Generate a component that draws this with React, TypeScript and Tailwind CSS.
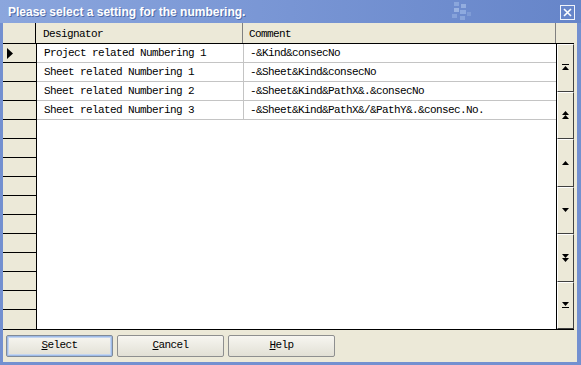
import React from "react";

const rows = [
  { designator: "Project related Numbering 1", comment: "-&Kind&consecNo" },
  { designator: "Sheet related Numbering 1", comment: "-&Sheet&Kind&consecNo" },
  { designator: "Sheet related Numbering 2", comment: "-&Sheet&Kind&PathX&.&consecNo" },
  { designator: "Sheet related Numbering 3", comment: "-&Sheet&Kind&PathX&/&PathY&.&consec.No." },
];

const mono = "font-['Liberation_Mono','DejaVu_Sans_Mono',monospace] text-[11px] tracking-[-0.6px] text-black";

function Tri({ down = false }: { down?: boolean }) {
  return down ? <polygon points="0,0 7,0 3.5,4" fill="black" /> : <polygon points="3.5,0 7,4 0,4" fill="black" />;
}

function ScrollIcon({ kind }: { kind: string }) {
  return (
    <svg width="7" height="10" viewBox="0 0 7 10">
      {kind === "first" && (
        <g>
          <rect x="0" y="1" width="7" height="1" fill="black" />
          <g transform="translate(0,3)"><Tri /></g>
        </g>
      )}
      {kind === "pageUp" && (
        <g>
          <g transform="translate(0,1)"><Tri /></g>
          <g transform="translate(0,5)"><Tri /></g>
        </g>
      )}
      {kind === "up" && <g transform="translate(0,3)"><Tri /></g>}
      {kind === "down" && <g transform="translate(0,3)"><Tri down /></g>}
      {kind === "pageDown" && (
        <g>
          <g transform="translate(0,1)"><Tri down /></g>
          <g transform="translate(0,5)"><Tri down /></g>
        </g>
      )}
      {kind === "last" && (
        <g>
          <g transform="translate(0,2)"><Tri down /></g>
          <rect x="0" y="7" width="7" height="1" fill="black" />
        </g>
      )}
    </svg>
  );
}

function DialogButton({ label, isDefault = false }: { label: string; isDefault?: boolean }) {
  return (
    <div
      className={`w-[107px] h-[22px] flex items-center justify-center border rounded-[2px] bg-gradient-to-b from-[#f7f6f1] to-[#e2e0d5] ${
        isDefault ? "border-[#7f8a99] shadow-[inset_0_0_0_1px_#9fbbe6,inset_0_0_0_2px_#c3d5f0]" : "border-[#8e8f8f]"
      }`}
    >
      <span className={mono}>
        <span className="underline">{label[0]}</span>
        {label.slice(1)}
      </span>
    </div>
  );
}

export default function App(): React.JSX.Element {
  return (
    <div className="w-[581px] h-[365px] bg-[#7390d0] flex flex-col overflow-hidden">
      {/* title bar */}
      <div className="h-[23px] flex items-center relative bg-gradient-to-r from-[#8ba6dd] via-[#7895d4] to-[#6685c9]">
        <span className="pl-[8px] text-white font-bold text-[12px] font-['Liberation_Sans',Arial,sans-serif] [text-shadow:1px_1px_0_#4f6aa8]">
          Please select a setting for the numbering.
        </span>
        <svg className="absolute left-[448px] top-[2px]" width="30" height="20" viewBox="0 0 30 20">
          <rect x="6" y="0" width="5" height="4" fill="#8aa6dc" />
          <rect x="13" y="2" width="5" height="4" fill="#93addf" />
          <rect x="6" y="6" width="5" height="4" fill="#9ab3e2" />
          <rect x="12" y="8" width="6" height="4" fill="#8eaadf" />
          <rect x="4" y="12" width="5" height="4" fill="#86a2da" />
          <rect x="12" y="14" width="5" height="4" fill="#89a5db" />
          <rect x="19" y="10" width="4" height="4" fill="#7f9cd6" />
        </svg>
        <div className="absolute left-[560px] top-[5px] w-[15px] h-[15px] border border-white/90 flex items-center justify-center">
          <svg width="9" height="9" viewBox="0 0 9 9">
            <path d="M1 1 L8 8 M8 1 L1 8" stroke="white" strokeWidth="1.6" />
          </svg>
        </div>
      </div>

      {/* body */}
      <div className="flex-1 ml-[3px] mr-[4px] mb-[3px] bg-[#ece9d8] flex flex-col">
        <div className="w-[571px] h-[307px] flex flex-col border-b border-black">
          {/* header */}
          <div className="h-[21px] shrink-0 flex border-b border-black bg-[#ece9d8]">
            <div className="w-[33px] border-r border-black" />
            <div className="w-[207px] border-r border-[#808080] flex items-center pl-[7px] pt-[2px]">
              <span className={mono}>Designator</span>
            </div>
            <div className="w-[313px] border-r border-[#808080] flex items-center pl-[6px] pt-[2px]">
              <span className={mono}>Comment</span>
            </div>
            <div className="flex-1" />
          </div>
          {/* rows */}
          <div className="flex-1 flex">
            <div className="w-[34px] border-r border-black flex flex-col">
              {Array.from({ length: 15 }).map((_, i) => (
                <div
                  key={i}
                  className={`h-[19px] shrink-0 flex items-center pl-[4px] ${i === 14 ? "" : "border-b border-black"}`}
                >
                  {i === 0 && (
                    <svg width="7" height="11" viewBox="0 0 7 11">
                      <polygon points="0,0 6,5.5 0,11" fill="black" />
                    </svg>
                  )}
                </div>
              ))}
            </div>
            <div className="w-[520px] bg-white flex flex-col">
              {rows.map((r) => (
                <div key={r.designator} className="h-[19px] flex border-b border-[#c4c4c4]">
                  <div className="w-[207px] border-r border-[#c4c4c4] flex items-center pl-[7px] pt-[1px]">
                    <span className={mono}>{r.designator}</span>
                  </div>
                  <div className="flex-1 flex items-center pl-[6px] pt-[1px]">
                    <span className={mono}>{r.comment}</span>
                  </div>
                </div>
              ))}
            </div>
            <div className="w-[18px] border-l border-black flex flex-col">
              {["first", "pageUp", "up", "down", "pageDown", "last"].map((k) => (
                <div
                  key={k}
                  className="flex-1 flex items-center justify-center bg-[#ece9d8] border-t border-l border-white border-b border-r border-b-[#404040] border-r-[#404040]"
                >
                  <ScrollIcon kind={k} />
                </div>
              ))}
            </div>
          </div>
        </div>
        {/* buttons */}
        <div className="flex-1 flex items-center gap-[4px] pl-[3px] pb-[1px]">
          <DialogButton label="Select" isDefault />
          <DialogButton label="Cancel" />
          <DialogButton label="Help" />
        </div>
      </div>
    </div>
  );
}
